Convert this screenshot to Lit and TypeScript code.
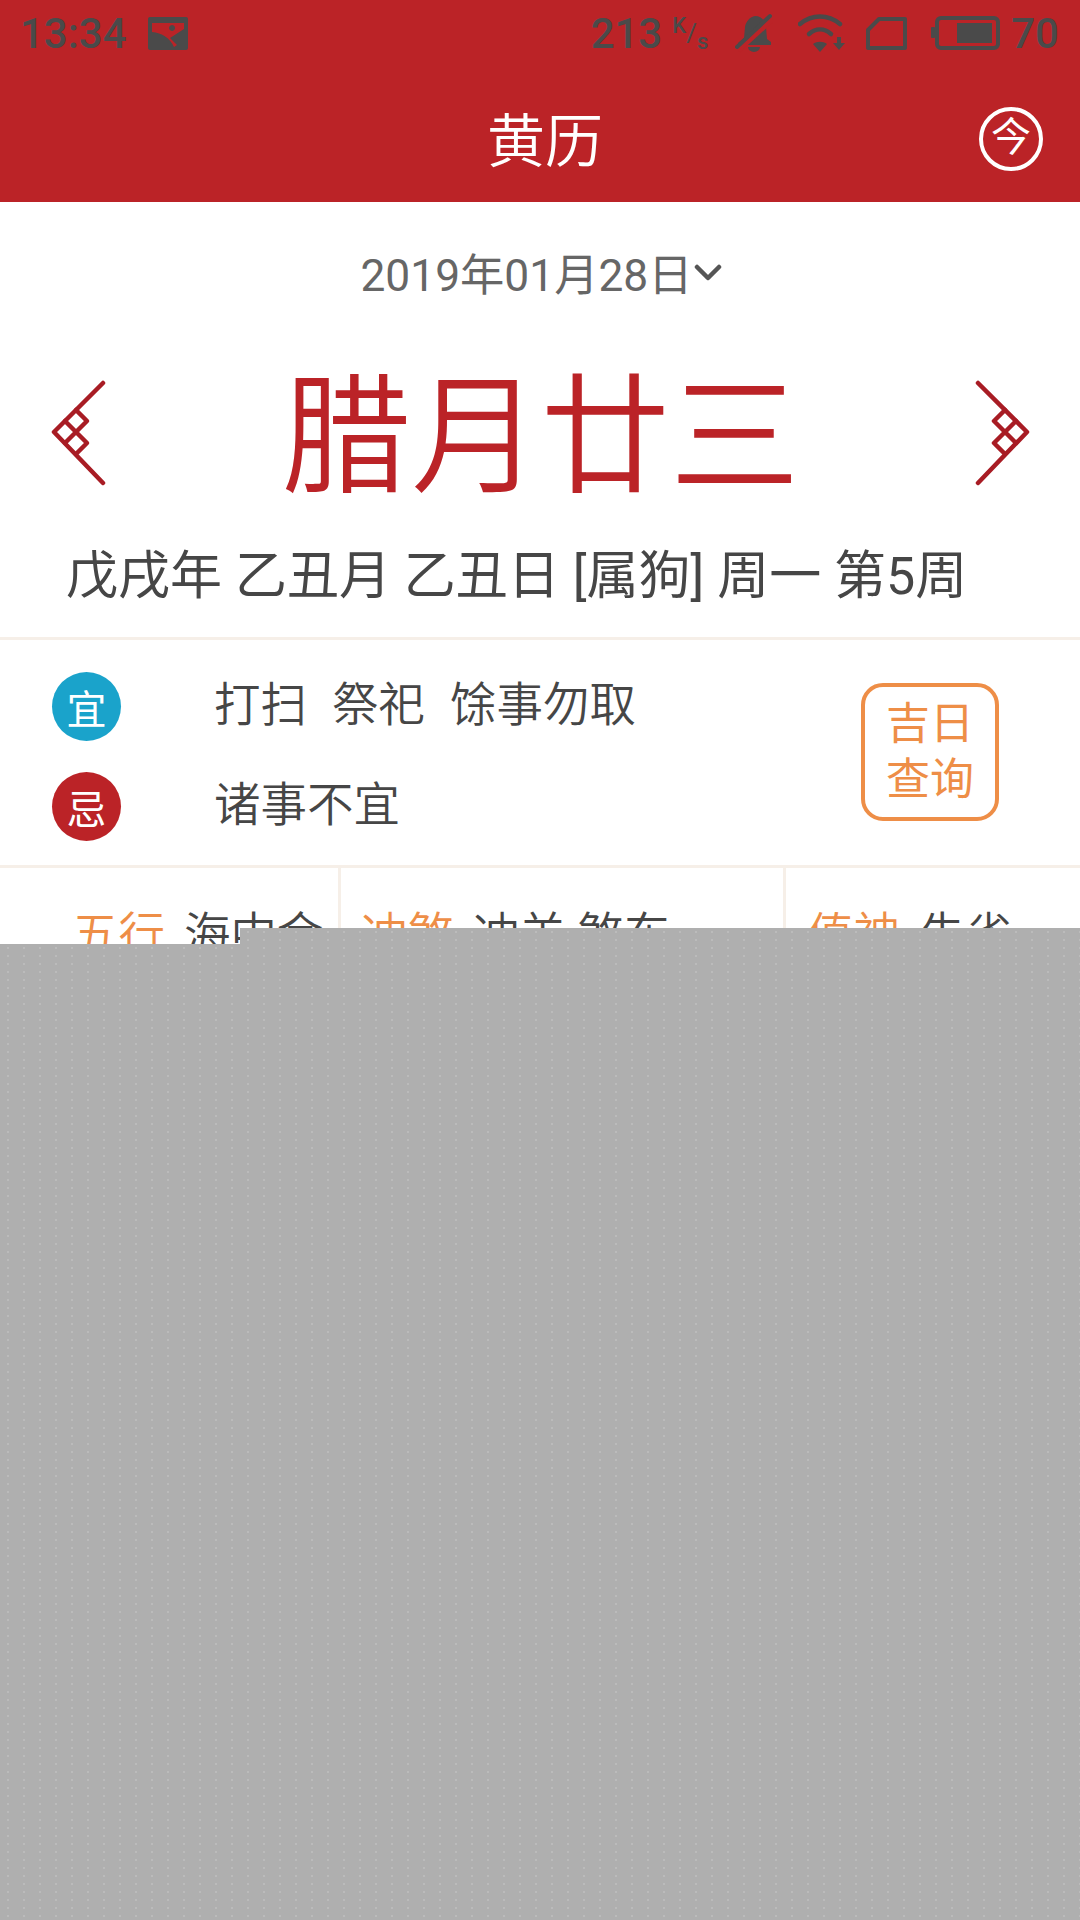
import { LitElement, css, html, svg } from 'lit';
import { customElement } from 'lit/decorators.js';

const lattice = svg`
  <path d="M49 0 L0 49 L49 100" />
  <path d="M22 27 L33 38 L11 60 M11 38 L33 60 L22 71" />
`;

@customElement('app-root')
export class AppRoot extends LitElement {
  static styles = css`
    :host {
      display: block;
      width: 1080px;
      height: 1920px;
      overflow: hidden;
      position: relative;
      background: #fff;
      font-family: Roboto, "Noto Sans CJK SC", sans-serif;
      color: #464646;
    }

    .top {
      height: 202px;
      background: #bb2327;
      display: flex;
      flex-direction: column;
    }

    .status {
      height: 66px;
      padding: 0 21px 0 20px;
      display: flex;
      align-items: center;
      color: #4a4a4a;
      font-weight: 500;
      font-size: 42px;
    }

    .status svg {
      display: block;
      fill: #4a4a4a;
      flex: none;
    }

    .status-right {
      margin-left: auto;
      display: flex;
      align-items: center;
    }

    .speed-unit {
      width: 36px;
      height: 33px;
      margin: 0 27px 0 10px;
      display: flex;
      font-size: 22px;
      line-height: 17px;
    }

    .speed-unit .up { align-self: flex-start; }
    .speed-unit .down { align-self: flex-end; }
    .speed-unit .mid { align-self: center; font-size: 26px; font-weight: 400; }

    .titlebar {
      flex: 1;
      display: flex;
      align-items: center;
      justify-content: flex-end;
      padding: 10px 37px 0 0;
      position: relative;
    }

    .title {
      position: absolute;
      left: 487px;
      margin-bottom: 5px;
      color: #fff;
      font-size: 58px;
      font-weight: 350;
    }

    .today {
      width: 64px;
      height: 64px;
      box-sizing: border-box;
      border: 4px solid #fff;
      border-radius: 50%;
      color: #fff;
      font-size: 40px;
      line-height: 54px;
      text-align: center;
    }

    .date {
      margin-top: 40px;
      padding-left: 2px;
      height: 60px;
      display: flex;
      justify-content: center;
      align-items: center;
      gap: 1px;
      color: #666;
      font-size: 44.3px;
    }

    .date svg { margin-top: 2px; }

    .lunar {
      margin-top: 41px;
      padding: 0 50px 0 51px;
      display: flex;
      align-items: center;
      justify-content: space-between;
      height: 180px;
    }

    .lunar svg {
      fill: none;
      stroke: #a81c24;
      stroke-width: 4.5;
      stroke-linecap: round;
      stroke-linejoin: round;
    }

    .lunar-text {
      margin-top: 12px;
      color: #bb2327;
      font-size: 129.5px;
      font-weight: 330;
      line-height: 1;
    }

    .ganzhi {
      margin-top: 22px;
      padding-left: 66px;
      font-size: 52px;
      height: 64px;
      line-height: 64px;
    }

    .rule {
      height: 3px;
      background: #f6efe8;
    }

    .almanac {
      height: 225px;
      display: flex;
      align-items: center;
    }

    .rows {
      flex: 1;
      padding: 8px 0 0 52px;
      display: flex;
      flex-direction: column;
      gap: 31px;
    }

    .row {
      height: 69px;
      display: flex;
      align-items: center;
      font-size: 46.5px;
      font-weight: 350;
    }

    .words {
      margin: 0 0 12px 93px;
      display: flex;
      gap: 25px;
    }

    .badge {
      width: 69px;
      height: 69px;
      border-radius: 50%;
      display: flex;
      align-items: center;
      justify-content: center;
      color: #fff;
      font-size: 40px;
      font-weight: 400;
    }

    .good { background: #1aa3cb; }
    .bad { background: #bb2327; }

    .lucky {
      width: 138px;
      height: 138px;
      box-sizing: border-box;
      margin: 0 81px 2px 0;
      border: 4px solid #ee8e47;
      border-radius: 22px;
      color: #ee8e47;
      font-size: 44px;
      line-height: 56px;
      text-align: center;
      display: flex;
      flex-direction: column;
      justify-content: center;
    }

    .cells {
      display: grid;
      grid-template-columns: 341px 445px 1fr;
      height: 200px;
    }

    .cell {
      padding-top: 37px;
      font-size: 46.5px;
      font-weight: 350;
      line-height: 60px;
      white-space: nowrap;
      border-right: 3px solid #f6efe8;
    }

    .cell:last-child { border-right: 0; }
    .cell b { color: #ee8e47; font-weight: 350; margin-right: 19px; }
    .cell.first { padding-left: 72px; }
    .cell.second { padding-left: 20px; }
    .cell.third { padding-left: 21px; }

    /* grey panel that covers the lower part of the capture, with a notch at the left */
    .mask {
      position: absolute;
      left: 0;
      right: 0;
      bottom: 0;
      top: 928px;
      background-color: #afafaf;
      background-image: radial-gradient(circle, #bbb 1px, transparent 1.4px);
      background-size: 16px 8px;
      clip-path: polygon(240px 0, 100% 0, 100% 100%, 0 100%, 0 16px, 240px 16px);
    }
  `;

  render() {
    return html`
      <div class="top">
        <div class="status">
          <span>13:34</span>
          <svg style="margin-left:21px" width="40" height="33" viewBox="0 0 40 33">
            <path fill-rule="evenodd" d="M2 0H38a2 2 0 0 1 2 2V31a2 2 0 0 1-2 2H2a2 2 0 0 1-2-2V2a2 2 0 0 1 2-2ZM4 6V15C14 16 22 21 26 30L29 28 22 21 36 12V6ZM24 8a3 3 0 1 0 .1 0Z" />
          </svg>
          <div class="status-right">
            <span>213</span>
            <span class="speed-unit"><span class="up">K</span><span class="mid">/</span><span class="down">s</span></span>
            <svg width="38" height="40" viewBox="0 0 38 40">
              <path d="M20 3c6 0 10 4 11 11l1 12 4 3v3H6L3 30l6-5 1-11c1-6 5-10 10-11ZM13 34h12a6 5 0 0 1-12 0Z" />
              <path d="M3 37 37 6" stroke="#bb2327" stroke-width="6" />
              <path d="M2 34 35 3" stroke="#4a4a4a" stroke-width="4" stroke-linecap="round" />
            </svg>
            <svg style="margin-left:25px" width="47" height="38" viewBox="0 0 47 38">
              <g fill="none" stroke="#4a4a4a" stroke-width="4.5" stroke-linecap="round">
                <path d="M2 10C14 0 30 0 42 10" />
                <path d="M11 20C18 14 26 14 33 20" />
              </g>
              <path d="M15 30C19 27 25 27 29 30L22 38Z" />
              <path d="M39 23h4v6h4l-6 7-6-7h4Z" />
            </svg>
            <svg style="margin-left:21px" width="41" height="33" viewBox="0 0 41 33">
              <path d="M13 2H39V31H2V13Z" fill="none" stroke="#4a4a4a" stroke-width="4" stroke-linejoin="round" />
            </svg>
            <svg style="margin-left:24px" width="69" height="34" viewBox="0 0 69 34">
              <rect x="0" y="11" width="4" height="11" rx="1" />
              <rect x="6" y="2" width="61" height="30" rx="4" fill="none" stroke="#4a4a4a" stroke-width="4" />
              <rect x="26" y="7" width="35" height="20" />
            </svg>
            <span style="margin-left:11px">70</span>
          </div>
        </div>
        <div class="titlebar">
          <span class="title">黄历</span>
          <div class="today">今</div>
        </div>
      </div>

      <div class="date">
        <span>2019年01月28日</span>
        <svg width="28" height="18" viewBox="0 0 28 18" fill="none" stroke="#555" stroke-width="4.5" stroke-linecap="round" stroke-linejoin="round">
          <path d="M3 3 14 14 25 3" />
        </svg>
      </div>

      <div class="lunar">
        <svg width="55" height="106" viewBox="-3 -3 55 106">${lattice}</svg>
        <span class="lunar-text">腊月廿三</span>
        <svg width="55" height="106" viewBox="-3 -3 55 106" style="transform:scaleX(-1)">${lattice}</svg>
      </div>

      <div class="ganzhi">戊戌年 乙丑月 乙丑日 [属狗] 周一 第5周</div>
      <div class="rule" style="margin-top:28px"></div>

      <div class="almanac">
        <div class="rows">
          <div class="row">
            <span class="badge good">宜</span>
            <span class="words"><span>打扫</span><span>祭祀</span><span>馀事勿取</span></span>
          </div>
          <div class="row">
            <span class="badge bad">忌</span>
            <span class="words"><span>诸事不宜</span></span>
          </div>
        </div>
        <div class="lucky"><span>吉日</span><span>查询</span></div>
      </div>
      <div class="rule"></div>

      <div class="cells">
        <div class="cell first"><b>五行</b>海中金</div>
        <div class="cell second"><b>冲煞</b>冲羊 煞东</div>
        <div class="cell third"><b>值神</b>朱雀</div>
      </div>

      <div class="mask"></div>
    `;
  }
}
